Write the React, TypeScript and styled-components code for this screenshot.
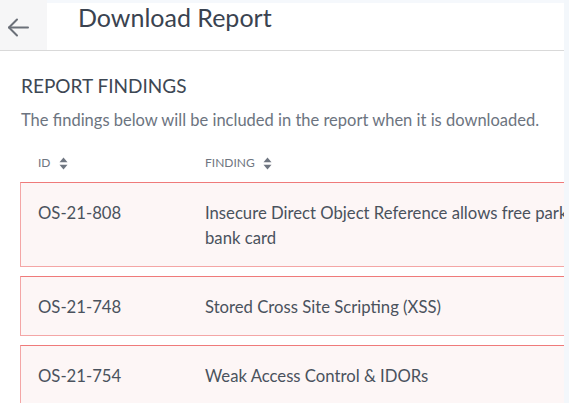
import React from 'react'
import styled, { createGlobalStyle } from 'styled-components'

const GlobalStyle = createGlobalStyle`
    html, body {
        margin: 0;
        padding: 0;
        background: #ffffff;
    }
    body {
        font-family: Lato, 'Open Sans', 'Liberation Sans', sans-serif;
        -webkit-font-smoothing: antialiased;
    }
`

const Page = styled.div`
    display: flex;
    width: 569px;
    height: 403px;
    overflow: hidden;
`

const Main = styled.div`
    flex: 1;
    min-width: 0;
    display: flex;
    flex-direction: column;
    background: #ffffff;
    overflow: hidden;
`

const Rail = styled.div`
    width: 5px;
    flex-shrink: 0;
    background: #f3f7fb;
`

const Header = styled.header`
    display: flex;
    height: 50px;
    flex-shrink: 0;
    border-bottom: 1px solid #d9d9d9;
`

const BackBox = styled.div`
    width: 47px;
    flex-shrink: 0;
    display: flex;
    align-items: flex-end;
    justify-content: flex-start;
    padding: 0 0 13px 7px;
    box-sizing: border-box;
    background: #f6f6f7;
`

const TitleBar = styled.div`
    flex: 1;
    display: flex;
    align-items: flex-start;
    padding-left: 31px;
    border-top: 3px solid #f5f8fc;
    box-sizing: border-box;

    h1 {
        margin: 0;
        font-size: 25px;
        line-height: 28px;
        font-weight: 400;
        color: #3a4350;
    }
`

const Section = styled.section`
    padding-left: 20px;

    h2 {
        margin: 24px 0 0 1px;
        font-size: 19px;
        line-height: 22px;
        font-weight: 400;
        color: #3d4753;
    }

    p {
        margin: 13px 0 0 1px;
        font-size: 16.5px;
        line-height: 20px;
        color: #6c7480;
        white-space: nowrap;
    }
`

const Table = styled.div`
    margin-top: 25px;
    width: 700px;
`

const Columns = styled.div<{ $head?: boolean }>`
    display: grid;
    grid-template-columns: 167px 500px;
    ${({ $head }) =>
        $head
            ? `
        padding: 0 0 0 1px;
        height: 16px;
        margin-bottom: 11px;
        font-size: 12px;
        line-height: 16px;
        color: #6f7681;
        text-transform: uppercase;
    `
            : ''}
`

const HeadCell = styled.div`
    display: flex;
    align-items: center;
    gap: 8px;
    padding-left: 17px;
`

const Row = styled(Columns)`
    padding: 18px 0 15px;
    margin-bottom: 9px;
    background: #fdf6f6;
    border: 1px solid #f4a6a6;
    border-top-color: #ef7a7a;
    font-size: 16.7px;
    line-height: 25px;
    color: #4a525d;
`

const Cell = styled.div`
    padding-left: 17px;
`

function SortIcon() {
    return (
        <svg width="9" height="13" viewBox="0 0 9 13" fill="#6f7681">
            <path d="M4.5 0.5 L8.5 5.2 L0.5 5.2 Z" />
            <path d="M4.5 12.5 L8.5 7.8 L0.5 7.8 Z" />
        </svg>
    )
}

function BackArrow() {
    return (
        <svg width="22" height="19" viewBox="0 0 22 19" fill="none" stroke="#6b7079" strokeWidth="2" strokeLinecap="round" strokeLinejoin="round">
            <path d="M21 9.5 H2" />
            <path d="M10 1.5 L2 9.5 L10 17.5" />
        </svg>
    )
}

const findings = [
    { id: 'OS-21-808', title: 'Insecure Direct Object Reference allows free parking with any bank card' },
    { id: 'OS-21-748', title: 'Stored Cross Site Scripting (XSS)' },
    { id: 'OS-21-754', title: 'Weak Access Control & IDORs' },
]

export default function App() {
    return (
        <Page>
            <GlobalStyle />
            <Main>
                <Header>
                    <BackBox>
                        <BackArrow />
                    </BackBox>
                    <TitleBar>
                        <h1>Download Report</h1>
                    </TitleBar>
                </Header>
                <Section>
                    <h2>REPORT FINDINGS</h2>
                    <p>The findings below will be included in the report when it is downloaded.</p>
                    <Table>
                        <Columns $head>
                            <HeadCell>
                                ID <SortIcon />
                            </HeadCell>
                            <HeadCell>
                                Finding <SortIcon />
                            </HeadCell>
                        </Columns>
                        {findings.map((f) => (
                            <Row key={f.id}>
                                <Cell>{f.id}</Cell>
                                <Cell>{f.title}</Cell>
                            </Row>
                        ))}
                    </Table>
                </Section>
            </Main>
            <Rail />
        </Page>
    )
}
